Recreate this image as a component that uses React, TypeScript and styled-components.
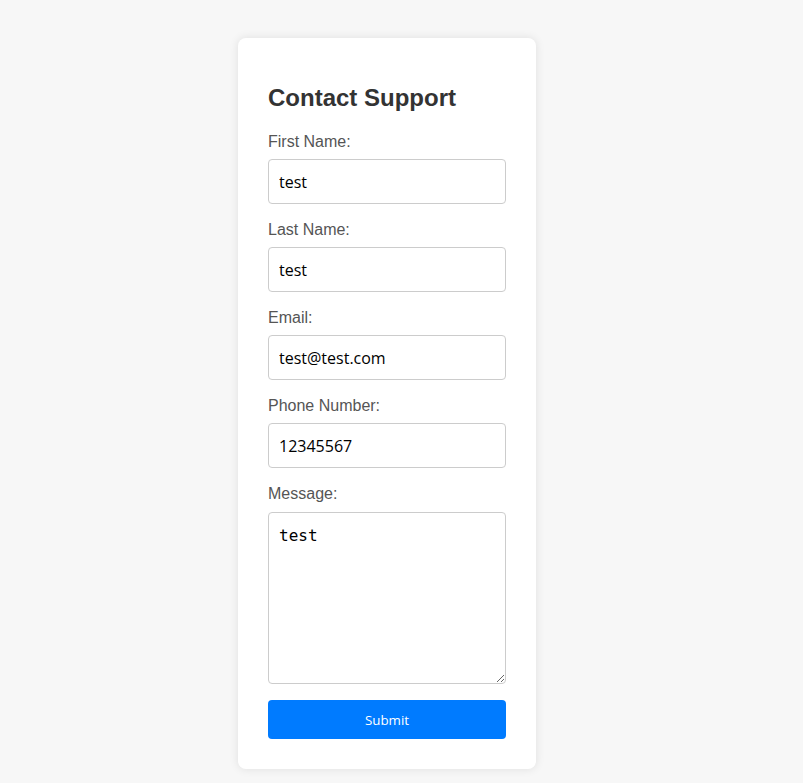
import { FC } from "react";
import styled, { createGlobalStyle } from "styled-components";

const GlobalStyle = createGlobalStyle`
   html, body {
      margin: 0;
      padding: 0;
      background: #f7f7f7;
   }
   body {
      font-family: "Liberation Sans", Arial, sans-serif;
   }
`;

const fields = [
   { label: "First Name:", type: "text", value: "test" },
   { label: "Last Name:", type: "text", value: "test" },
   { label: "Email:", type: "email", value: "test@test.com" },
   { label: "Phone Number:", type: "tel", value: "12345567" },
];

const App: FC = () => {
   return (
      <>
         <GlobalStyle />
         <Styled.Page>
            <Styled.Card onSubmit={(e) => e.preventDefault()}>
               <Styled.Title>Contact Support</Styled.Title>
               {fields.map((f, i) => (
                  <Styled.Group key={i}>
                     <Styled.Label>{f.label}</Styled.Label>
                     <Styled.Input type={f.type} defaultValue={f.value} />
                  </Styled.Group>
               ))}
               <Styled.Group>
                  <Styled.Label $space={9}>Message:</Styled.Label>
                  <Styled.TextArea defaultValue="test" />
               </Styled.Group>
               <Styled.Button type="submit">Submit</Styled.Button>
            </Styled.Card>
         </Styled.Page>
      </>
   );
};

const Styled = {
   Page: styled.div`
      min-height: 783px;
      box-sizing: border-box;
      padding: 38px 0 14px 238px;
   `,
   Card: styled.form`
      width: 298px;
      box-sizing: border-box;
      padding: 30px;
      background: #fff;
      border-radius: 8px;
      box-shadow: 0 0 10px rgba(0, 0, 0, 0.1);
      display: flex;
      flex-direction: column;
   `,
   Title: styled.h2`
      margin: 16px 0 20px;
      font-size: 24px;
      line-height: 28px;
      font-weight: bold;
      color: #333;
   `,
   Group: styled.div`
      display: flex;
      flex-direction: column;
      margin-bottom: 16px;
   `,
   Label: styled.label<{ $space?: number }>`
      display: block;
      font-size: 16px;
      line-height: 19px;
      color: #555;
      margin-bottom: ${(p) => p.$space ?? 8}px;
   `,
   Input: styled.input`
      box-sizing: border-box;
      width: 100%;
      height: 45px;
      margin: 0;
      padding: 0 10px;
      border: 1px solid #ccc;
      border-radius: 4px;
      font-family: "Open Sans", "Noto Sans", sans-serif;
      font-size: 16px;
      color: #000;
      outline: none;
   `,
   TextArea: styled.textarea`
      box-sizing: border-box;
      width: 100%;
      height: 172px;
      margin: 0;
      padding: 13px 10px 10px;
      border: 1px solid #ccc;
      border-radius: 4px;
      font-family: "DejaVu Sans Mono", monospace;
      font-size: 16px;
      line-height: 19px;
      color: #000;
      outline: none;
   `,
   Button: styled.button`
      height: 39px;
      width: 100%;
      border: none;
      border-radius: 4px;
      background: #007bff;
      color: #fff;
      font-family: "Open Sans", "Noto Sans", sans-serif;
      font-size: 13.33px;
      cursor: pointer;
   `,
};

export default App;
